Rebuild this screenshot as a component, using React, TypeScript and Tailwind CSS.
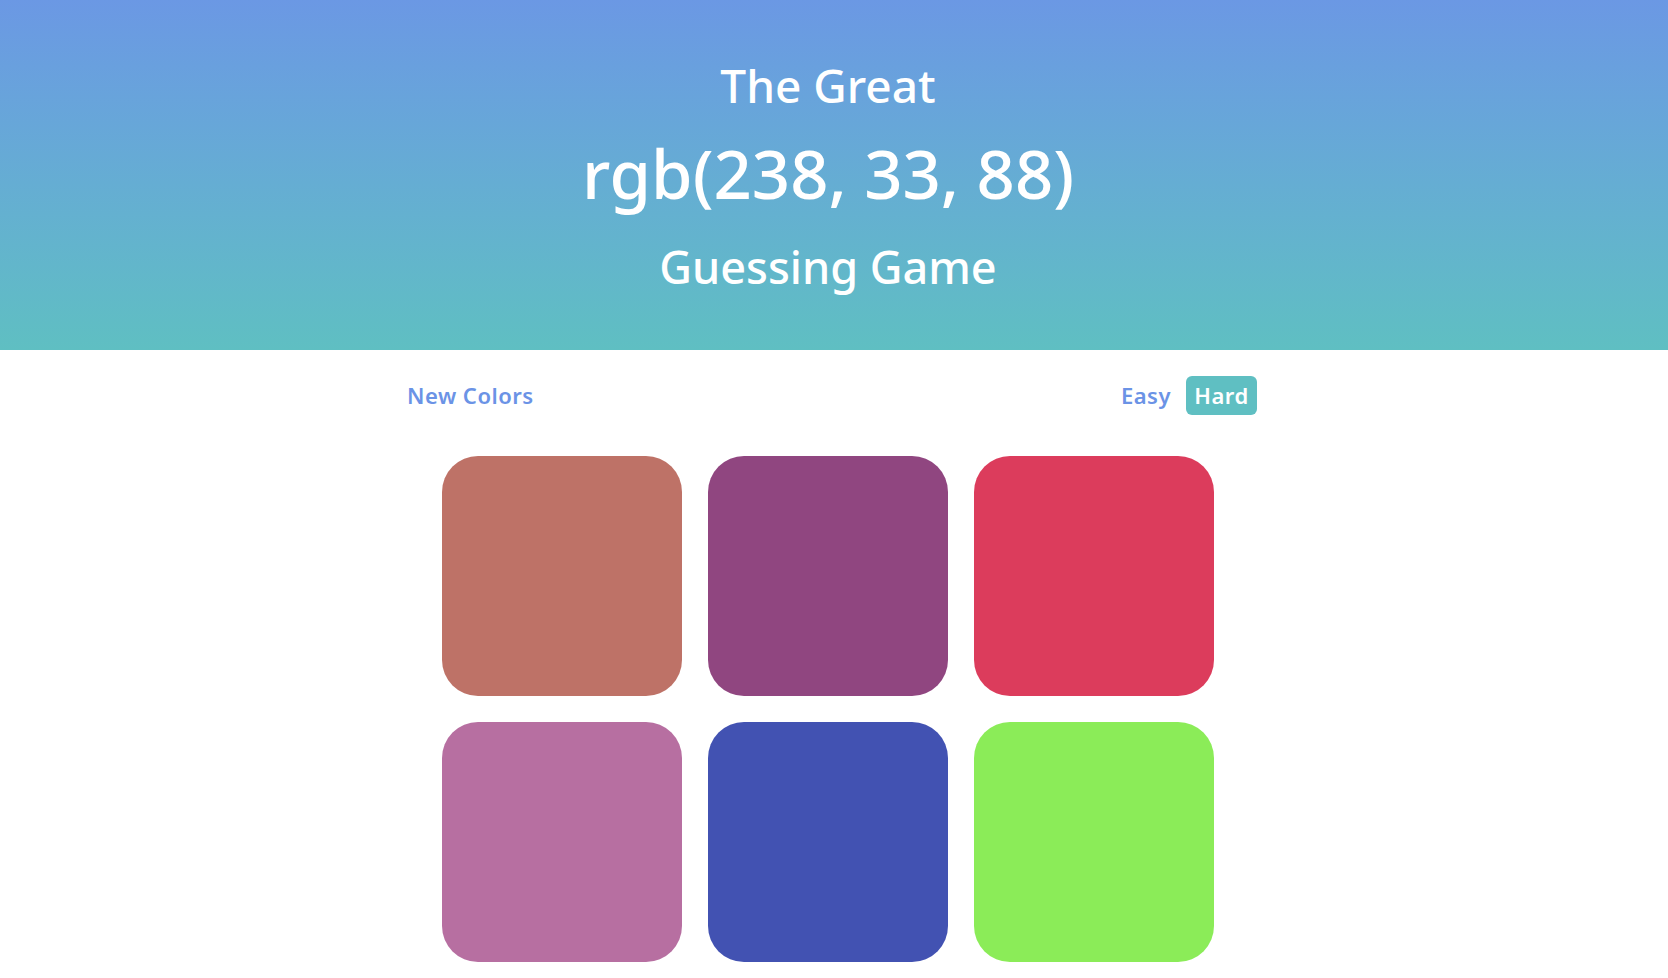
import React from "react";

const colors = ["#be7267", "#904680", "#dc3c5c", "#b76fa1", "#4252b2", "#8bec58"];

export default function App() {
  return (
    <div className="min-h-screen bg-white" style={{ fontFamily: '"Noto Sans", "Open Sans", sans-serif' }}>
      <header className="h-[350px] bg-gradient-to-b from-[#6b98e4] to-[#5fbfc2] text-white text-center pt-[62px] pr-[12px]">
        <h1 className="font-normal">
          <div className="text-[46px] leading-[46px] font-medium">The Great</div>
          <div className="mt-[32px] text-[67px] leading-[67px] font-medium">rgb(238, 33, 88)</div>
          <div className="mt-[37px] text-[45px] leading-[45px] font-medium">Guessing Game</div>
        </h1>
      </header>
      <div className="flex justify-center pr-[4px]">
        <div className="w-[850px]">
          <div className="mt-[26px] h-[39px] flex items-center justify-between">
            <button className="text-[22px] leading-[39px] font-semibold tracking-[0.5px] text-[#6b93e6]">New Colors</button>
            <div className="flex items-center gap-[15px]">
              <button className="text-[22px] leading-[39px] font-semibold tracking-[0.5px] text-[#6b93e6]">Easy</button>
              <button className="w-[71px] h-[39px] rounded-[6px] bg-[#5fbfc2] text-white text-[22px] leading-[39px] font-semibold tracking-[0.5px] flex items-center justify-center">Hard</button>
            </div>
          </div>
          <div className="mt-[41px] ml-[35px] grid grid-cols-[240px_240px_240px] gap-[26px]">
            {colors.map((c, i) => (
              <div key={i} className="w-[240px] h-[240px] rounded-[36px]" style={{ backgroundColor: c }} />
            ))}
          </div>
        </div>
      </div>
    </div>
  );
}
